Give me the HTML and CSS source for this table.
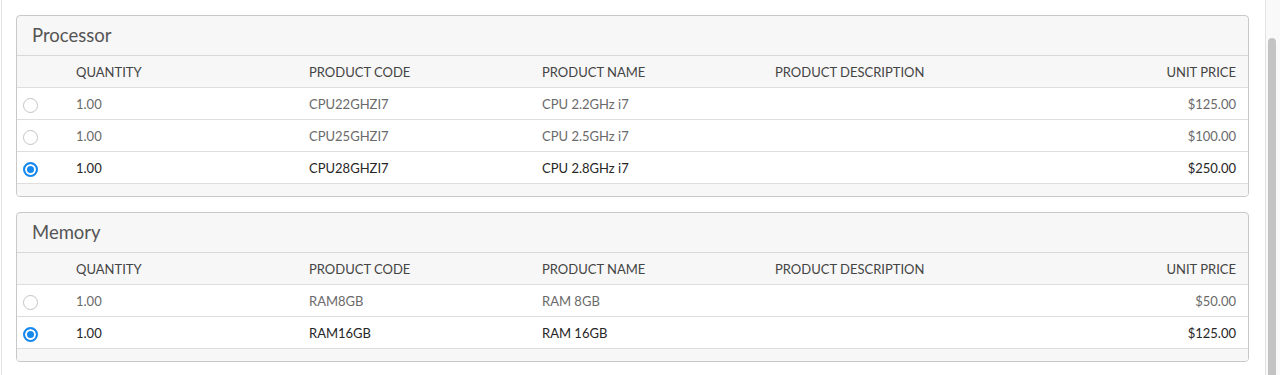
FILE: index.html
```html
<!DOCTYPE html>
<html lang="en">
<head>
<meta charset="utf-8">
<title>Product options</title>
<link rel="stylesheet" href="styles.css">
</head>
<body>
<div class="frame">
  <main class="page">
    <section class="panel">
      <h2 class="panel-title">Processor</h2>
      <table class="grid">
        <colgroup><col class="c-radio"><col class="c-col"><col class="c-col"><col class="c-col"><col class="c-col"><col></colgroup>
        <thead>
          <tr><th></th><th>QUANTITY</th><th>PRODUCT CODE</th><th>PRODUCT NAME</th><th>PRODUCT DESCRIPTION</th><th class="num">UNIT PRICE</th></tr>
        </thead>
        <tbody>
          <tr><td class="rcell"><span class="radio"></span></td><td>1.00</td><td>CPU22GHZI7</td><td>CPU 2.2GHz i7</td><td></td><td class="num">$125.00</td></tr>
          <tr><td class="rcell"><span class="radio"></span></td><td>1.00</td><td>CPU25GHZI7</td><td>CPU 2.5GHz i7</td><td></td><td class="num">$100.00</td></tr>
          <tr class="sel"><td class="rcell"><span class="radio on"></span></td><td>1.00</td><td>CPU28GHZI7</td><td>CPU 2.8GHz i7</td><td></td><td class="num">$250.00</td></tr>
        </tbody>
      </table>
      <div class="panel-foot"></div>
    </section>
    <section class="panel">
      <h2 class="panel-title">Memory</h2>
      <table class="grid">
        <colgroup><col class="c-radio"><col class="c-col"><col class="c-col"><col class="c-col"><col class="c-col"><col></colgroup>
        <thead>
          <tr><th></th><th>QUANTITY</th><th>PRODUCT CODE</th><th>PRODUCT NAME</th><th>PRODUCT DESCRIPTION</th><th class="num">UNIT PRICE</th></tr>
        </thead>
        <tbody>
          <tr><td class="rcell"><span class="radio"></span></td><td>1.00</td><td>RAM8GB</td><td>RAM 8GB</td><td></td><td class="num">$50.00</td></tr>
          <tr class="sel"><td class="rcell"><span class="radio on"></span></td><td>1.00</td><td>RAM16GB</td><td>RAM 16GB</td><td></td><td class="num">$125.00</td></tr>
        </tbody>
      </table>
      <div class="panel-foot"></div>
    </section>
  </main>
  <div class="scrollbar"><div class="thumb"></div></div>
</div>
</body>
</html>
```
FILE: styles.css
```css
html, body {
  margin: 0;
  padding: 0;
  background: #fff;
  height: 375px;
  overflow: hidden;
}
body {
  font-family: Lato, "Open Sans", "Liberation Sans", sans-serif;
  color: #3e3e3e;
}
.frame {
  display: flex;
  height: 375px;
  margin-left: 1px;
  border-left: 1px solid #e3e3e3;
}
.page {
  flex: 1;
  padding: 15px 16px 0 14px;
  display: flex;
  flex-direction: column;
  gap: 15px;
}
.panel {
  border: 1px solid #c8c8c8;
  border-radius: 4px;
  background: #f7f7f7;
  overflow: hidden;
}
.panel-title {
  margin: 0;
  height: 39px;
  border-bottom: 1px solid #d8d8d8;
  padding-left: 15px;
  font-size: 18.5px;
  font-weight: 400;
  line-height: 39px;
  color: #555;
}
.grid {
  width: 100%;
  border-collapse: collapse;
  table-layout: fixed;
}
.c-radio { width: 59px; }
.c-col { width: 233px; }
.grid th, .grid td {
  height: 31px;
  padding: 0;
  border-bottom: 1px solid #dedede;
  text-align: left;
  vertical-align: middle;
  font-size: 13px;
  white-space: nowrap;
}
.grid th {
  font-weight: 400;
  color: #444;
  background: #f7f7f7;
}
.grid td {
  background: #fff;
  color: #6a6a6a;
  font-weight: 400;
}
.grid tr.sel td {
  color: #262626;
  font-weight: 400;
}
.grid .num {
  text-align: right;
  padding-right: 12px;
}
.grid td.rcell {
  padding-left: 6px;
  padding-top: 4px;
  height: 27px;
}
.radio {
  display: block;
  width: 15px;
  height: 15px;
  box-sizing: border-box;
  border-radius: 50%;
  border: 1px solid #c4c4c4;
  background: #fff;
}
.radio.on {
  border: 2px solid #1589ee;
  background: #1589ee;
  box-shadow: inset 0 0 0 2px #fff;
}
.panel-foot {
  height: 12px;
  background: #f7f7f7;
}
.scrollbar {
  width: 15px;
  border-left: 1px solid #e2e2e2;
  background: #f9f9f9;
  display: flex;
  flex-direction: column;
  padding: 38px 4px 0 2px;
  box-sizing: border-box;
}
.thumb {
  flex: 1;
  background: #c3c3c3;
  border-radius: 4px 4px 0 0;
}
```
